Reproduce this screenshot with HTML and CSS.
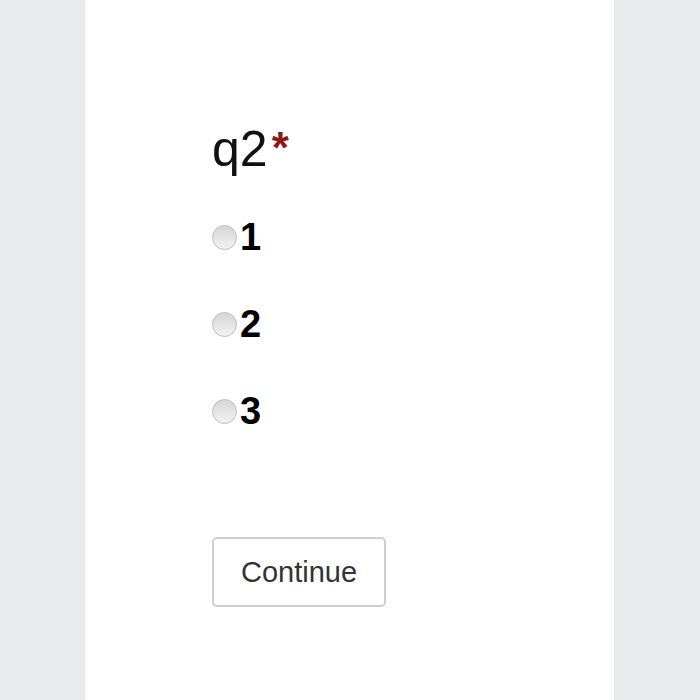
FILE: index.html
```html
<!DOCTYPE html>
<html>
<head>
<meta charset="utf-8">
<link rel="stylesheet" href="styles.css">
</head>
<body>
<div class="panel">
  <div class="question">q2<span class="req">*</span></div>
  <div class="options">
    <label class="option"><input type="radio" name="q2" class="radio"><span>1</span></label>
    <label class="option"><input type="radio" name="q2" class="radio"><span>2</span></label>
    <label class="option"><input type="radio" name="q2" class="radio"><span>3</span></label>
  </div>
  <button class="btn">Continue</button>
</div>
</body>
</html>
```
FILE: styles.css
```css
html, body {
  margin: 0;
  padding: 0;
  height: 100%;
}
body {
  background: #e9eaec;
  font-family: "Liberation Sans", Arial, sans-serif;
}
.panel {
  margin-left: 85px;
  width: 529px;
  height: 700px;
  background: #ffffff;
  box-sizing: border-box;
  padding: 119px 0 0 127px;
}
.question {
  font-size: 50px;
  line-height: 60px;
  color: #111;
}
.req {
  color: #8b1a1a;
  font-size: 44px;
  font-weight: bold;
  vertical-align: top;
  position: relative;
  top: -1px;
  margin-left: 4px;
}
.options {
  display: flex;
  flex-direction: column;
  gap: 50px;
  margin-top: 40px;
}
.option {
  display: flex;
  align-items: center;
  font-size: 38px;
  font-weight: bold;
  line-height: 37px;
  color: #000;
}
.radio {
  appearance: none;
  -webkit-appearance: none;
  margin: 0 3px 0 0;
  width: 25px;
  height: 25px;
  border-radius: 50%;
  border: 1px solid #bdbdbd;
  background: linear-gradient(#d6d6d6, #f2f2f2);
  box-sizing: border-box;
}
.btn {
  display: block;
  margin-top: 107px;
  width: 174px;
  height: 70px;
  background: #fff;
  border: 2px solid #cfcfcf;
  border-radius: 5px;
  font-family: "Liberation Sans", Arial, sans-serif;
  font-size: 29px;
  color: #333;
  padding: 0;
}
```
